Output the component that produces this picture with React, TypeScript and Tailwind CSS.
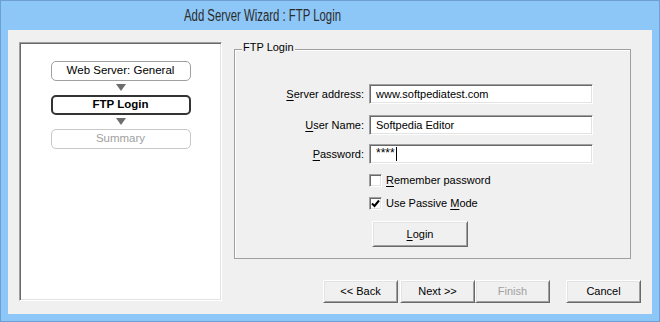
import React from "react";

const sunken =
  "bg-white border border-t-[#a0a0a0] border-l-[#a0a0a0] border-r-white border-b-white shadow-[inset_1px_1px_0_#696969,inset_-1px_-1px_0_#e3e3e3]";
const raised =
  "bg-[#f0f0f0] border border-t-white border-l-white border-r-[#696969] border-b-[#696969] shadow-[inset_1px_1px_0_#e3e3e3,inset_-1px_-1px_0_#a0a0a0]";

function U({ children }: { children: React.ReactNode }) {
  return <span className="underline underline-offset-[2px]">{children}</span>;
}

function Arrow() {
  return (
    <div className="h-[14px] flex justify-center pt-[3px]">
      <svg width="10" height="7" viewBox="0 0 10 7">
        <polygon points="0,0 10,0 5,7" fill="#6d6d6d" />
      </svg>
    </div>
  );
}

function Button({
  children,
  className = "",
  disabled = false,
}: {
  children: React.ReactNode;
  className?: string;
  disabled?: boolean;
}) {
  return (
    <div
      className={`${raised} w-[75px] h-[23px] flex items-center justify-center text-[11px] ${
        disabled ? "text-[#a0a0a0]" : "text-black"
      } ${className}`}
    >
      {children}
    </div>
  );
}

function Field({
  label,
  value,
  className = "",
  children,
}: {
  label: React.ReactNode;
  value?: string;
  className?: string;
  children?: React.ReactNode;
}) {
  return (
    <div className={`flex items-center h-[20px] ${className}`}>
      <div className="w-[129px] text-right text-[11px] text-black">{label}</div>
      <div className={`${sunken} ml-[5px] w-[224px] h-[20px] flex items-center pl-[6px] text-[11px] text-black`}>
        {value}
        {children}
      </div>
    </div>
  );
}

function Check({ checked, className = "", children }: { checked: boolean; className?: string; children: React.ReactNode }) {
  return (
    <div className={`flex items-center h-[13px] ml-[134px] ${className}`}>
      <div className={`${sunken} w-[13px] h-[13px] flex items-center justify-center`}>
        {checked && (
          <svg width="9" height="9" viewBox="0 0 9 9">
            <polyline points="1,4.5 3.5,7 8,1.5" fill="none" stroke="#000" strokeWidth="2" />
          </svg>
        )}
      </div>
      <div className="ml-[4px] text-[11px] text-black">{children}</div>
    </div>
  );
}

export default function App() {
  return (
    <div
      className="w-[660px] h-[322px] bg-[#8dc7f7] border border-[#6e9fd4] flex flex-col"
      style={{ fontFamily: '"Liberation Sans", Arial, sans-serif' }}
    >
      <div className="h-[29px] flex items-center pl-[183px]">
        <span className="inline-block origin-left scale-x-[0.71] text-[16px] text-[#2b2b2b] whitespace-nowrap leading-none">
          Add Server Wizard : FTP Login
        </span>
      </div>
      <div className="mx-[7px] w-[644px] h-[284px] bg-[#f0f0f0] flex pl-[11px] pt-[12px]">
        {/* Left step panel */}
        <div className={`${sunken} w-[203px] h-[259px] flex flex-col items-center pt-[18px]`}>
          <div className="w-[140px] h-[20px] rounded-[5px] border border-[#a0a0a0] flex items-center justify-center text-[11.5px] text-black">
            Web Server: General
          </div>
          <Arrow />
          <div className="w-[140px] h-[20px] rounded-[5px] border-2 border-[#333333] flex items-center justify-center text-[11.5px] font-bold text-black">
            FTP Login
          </div>
          <Arrow />
          <div className="w-[140px] h-[20px] rounded-[5px] border border-[#c8c8c8] flex items-center justify-center text-[11.5px] text-[#a0a0a0]">
            Summary
          </div>
        </div>

        {/* Right column */}
        <div className="ml-[12px] w-[407px] h-[261px] flex flex-col">
          <div className="relative mt-[7px] w-[397px] h-[210px] border border-[#a0a0a0] shadow-[inset_1px_1px_0_#ffffff]">
            <div className="absolute left-[7px] top-[-9px] bg-[#f0f0f0] px-[1px] text-[11px] leading-[13px] text-black">
              FTP Login
            </div>
            <div className="flex flex-col pt-[34px]">
              <Field
                label={
                  <>
                    <U>S</U>erver address:
                  </>
                }
                value="www.softpediatest.com"
              />
              <Field
                className="mt-[11px]"
                label={
                  <>
                    <U>U</U>ser Name:
                  </>
                }
                value="Softpedia Editor"
              />
              <Field
                className="mt-[9px]"
                label={
                  <>
                    <U>P</U>assword:
                  </>
                }
              >
                <span className="text-[12px] leading-[12px] mt-[-2px]">****</span>
                <span className="ml-[1px] w-[1px] h-[14px] bg-black" />
              </Field>
              <Check checked={false} className="mt-[10px]">
                <U>R</U>emember password
              </Check>
              <Check checked={true} className="mt-[10px]">
                Use Passive <U>M</U>ode
              </Check>
              <div className="mt-[11px] ml-[137px]">
                <div className={`${raised} w-[96px] h-[26px] flex items-center justify-center text-[11px] text-black`}>
                  <span>
                    <U>L</U>ogin
                  </span>
                </div>
              </div>
            </div>
          </div>

          <div className="mt-auto flex justify-end">
            <Button>&lt;&lt; Back</Button>
            <Button className="ml-[2px]">Next &gt;&gt;</Button>
            <Button disabled>Finish</Button>
            <Button className="ml-[16px]">Cancel</Button>
          </div>
        </div>
      </div>
    </div>
  );
}
